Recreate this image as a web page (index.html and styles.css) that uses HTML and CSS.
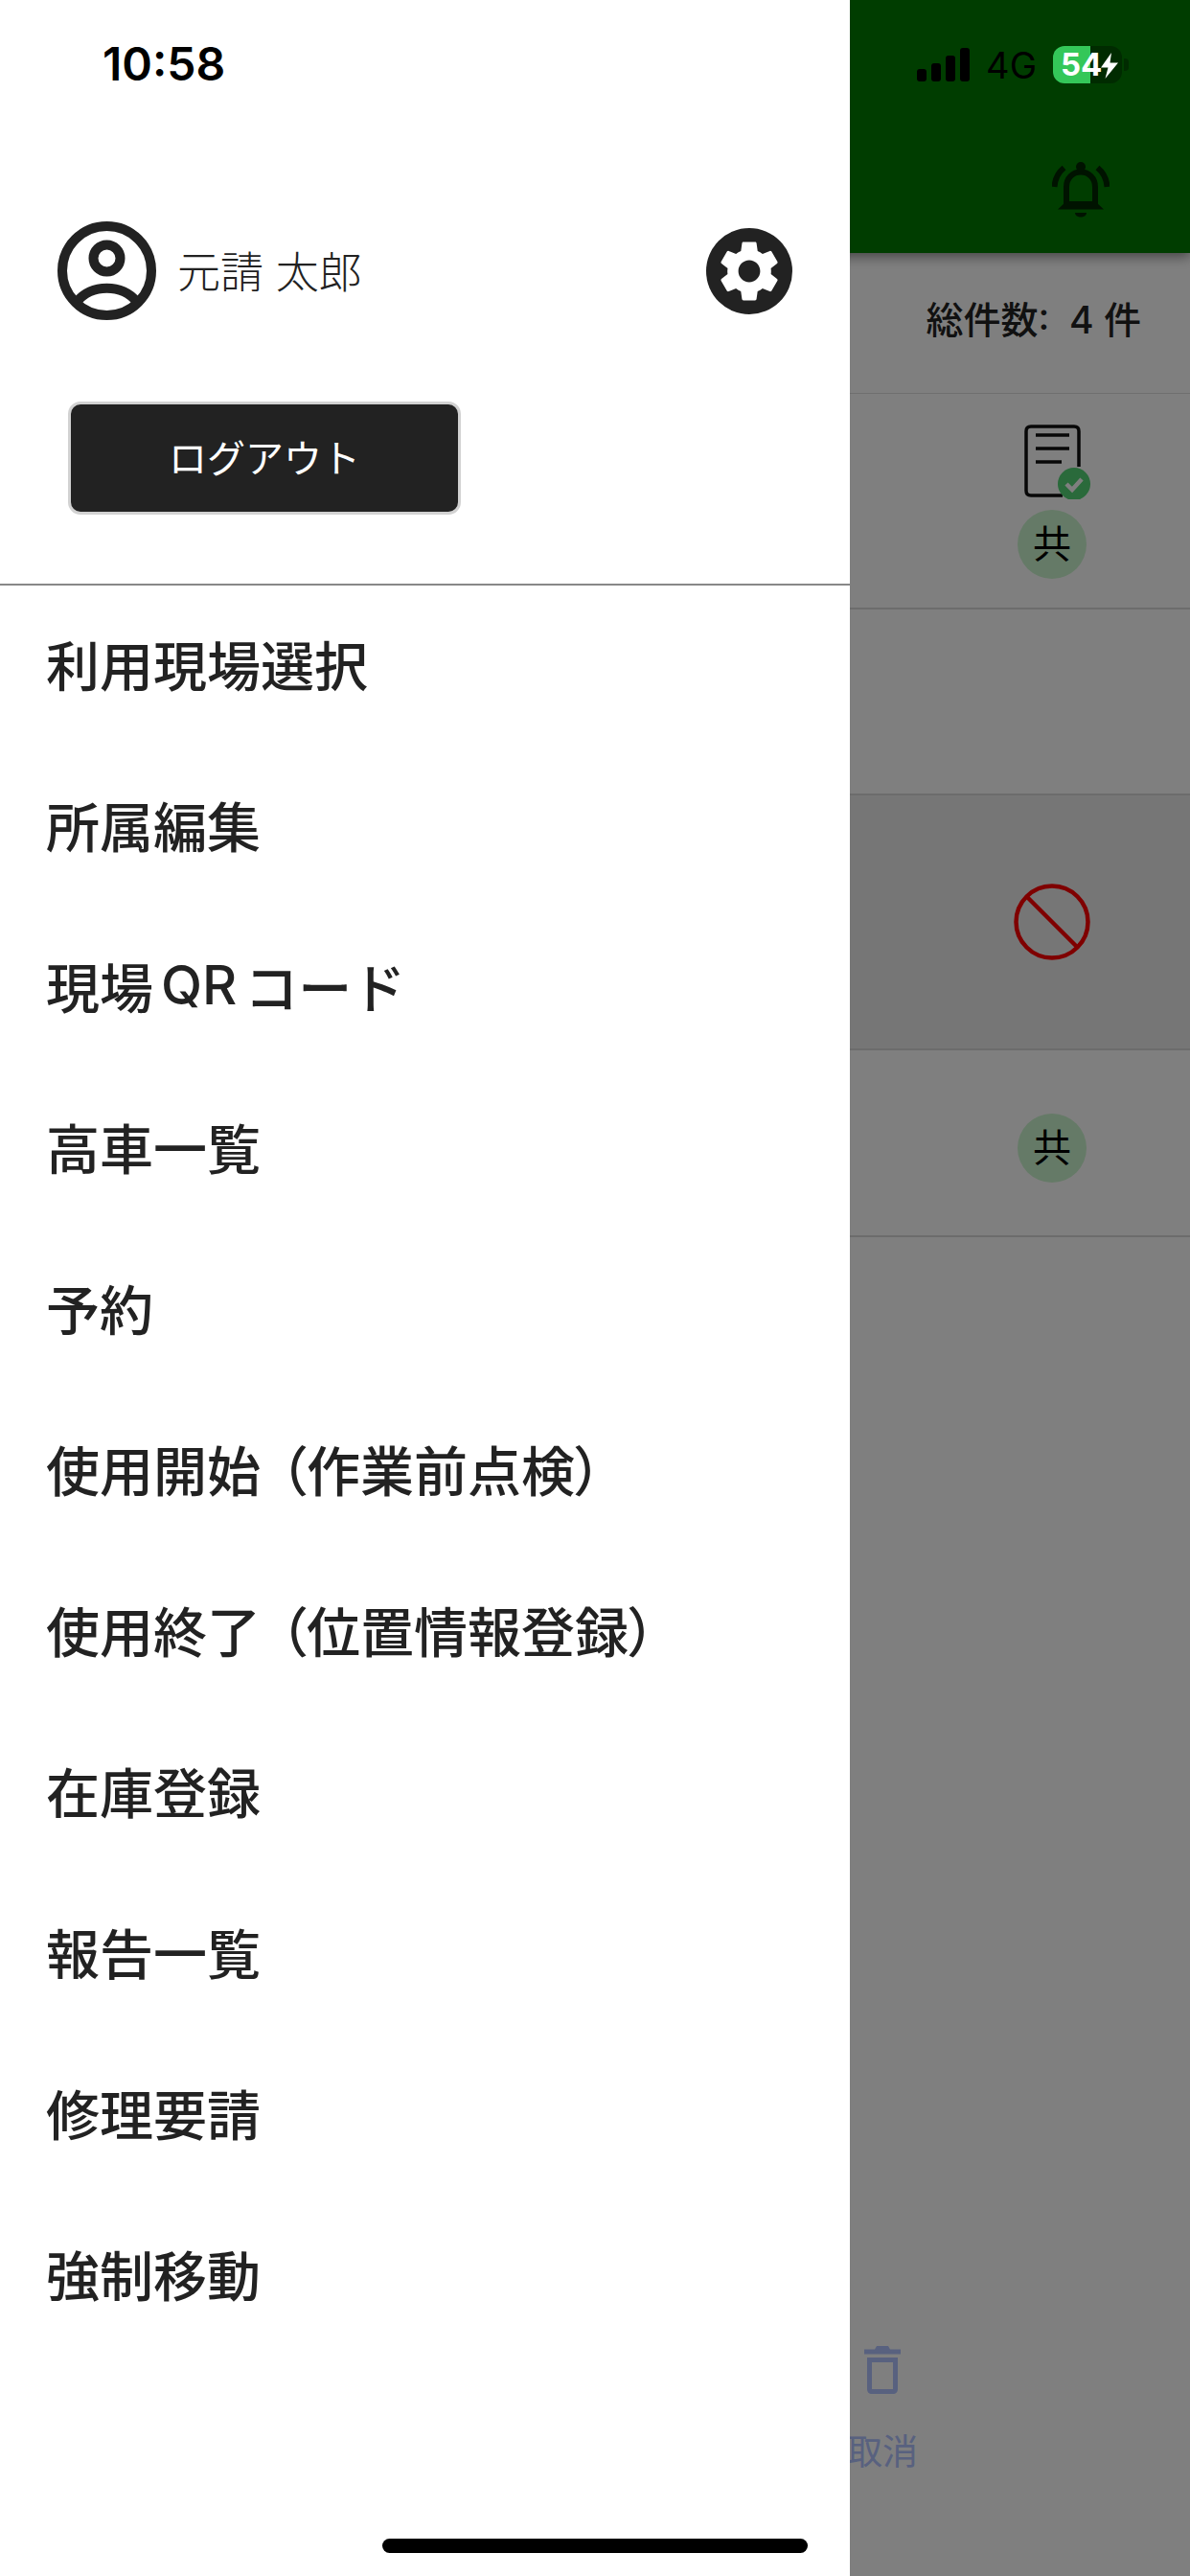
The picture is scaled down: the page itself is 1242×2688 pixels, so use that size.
FILE: index.html
```html
<!DOCTYPE html>
<html lang="ja">
<head>
<meta charset="utf-8">
<title>メニュー</title>
<link rel="stylesheet" href="styles.css">
</head>
<body>
<div class="screen">
  <main class="app">
    <header class="app-header">
      <svg class="bell" viewBox="0 0 60 60" fill="none" stroke="currentColor">
        <path d="M2.500 27C3 19 6.500 12 12.500 7M57.500 27C57 19 53.500 12 47.500 7" stroke-width="6"/>
        <path d="M15 46V27C15 18 21.500 11.500 30 11.500S45 18 45 27V46" stroke-width="6"/>
        <circle cx="30" cy="6" r="5" fill="currentColor" stroke="none"/>
        <path d="M6 50.500L15 42H45L54 50.500Z" fill="currentColor" stroke="none"/>
        <path d="M24 54H36C36 60 24 60 24 54Z" fill="currentColor" stroke="none"/>
      </svg>
    </header>
    <div class="summary">総件数:&nbsp;&nbsp;4 件</div>
    <section class="row row-one">
      <svg class="doc" viewBox="0 0 70 78" fill="none" stroke="currentColor" stroke-width="3.500">
        <path d="M40 74H7C3.500 74 2 72 2 69V7C2 4 3.500 2 7 2H52C55.500 2 57 4 57 7V44"/>
        <path d="M12 11H47M12 25H47M12 39H39"/>
        <circle class="doc-check-bg" cx="52" cy="62" r="17" stroke="none"/>
        <path class="doc-check" d="M44 62L50 68L60 57" stroke-width="4.500"/>
      </svg>
      <span class="badge">共</span>
    </section>
    <section class="row row-two"></section>
    <section class="row row-three">
      <svg class="ban" viewBox="0 0 80 80" fill="none" stroke="currentColor" stroke-width="4.500">
        <circle cx="40" cy="40" r="37.500"/>
        <path d="M13.500 13.500L66.500 66.500"/>
      </svg>
    </section>
    <section class="row row-four"><span class="badge">共</span></section>
    <footer class="toolbar">
      <div class="tool">
        <svg class="trash" viewBox="0 0 38 50">
          <path d="M0 3.500H11L13 0H25L27 3.500H38V8.500H0Z"/>
          <path d="M3 12H35V45C35 48 33 50 30 50H8C5 50 3 48 3 45ZM8 17V45H30V17Z" fill-rule="evenodd"/>
        </svg>
        <span class="tool-label">取消</span>
      </div>
    </footer>
  </main>

  <div class="scrim"></div>

  <aside class="drawer">
    <div class="drawer-head">
      <div class="profile">
        <svg class="avatar" viewBox="0 0 103 103" fill="none" stroke="currentColor" stroke-width="10">
          <circle cx="51.500" cy="51.500" r="46.500"/>
          <circle cx="51.500" cy="38.500" r="14"/>
          <path d="M20 84C36 65 67 65 83 84"/>
        </svg>
        <span class="name">元請 太郎</span>
        <span class="settings">
          <svg class="gear" viewBox="0 0 24 24"><path d="M19.140 12.940c.04-.3.06-.61.06-.94 0-.32-.02-.64-.07-.94l2.030-1.580c.18-.14.23-.41.12-.61l-1.920-3.320c-.12-.22-.37-.29-.59-.22l-2.390.96c-.5-.38-1.030-.7-1.620-.94l-.36-2.540c-.04-.24-.24-.41-.48-.41h-3.840c-.24 0-.43.17-.47.41l-.36 2.540c-.59.24-1.130.57-1.620.94l-2.390-.96c-.22-.08-.47 0-.59.22L2.740 8.870c-.12.21-.08.47.12.61l2.030 1.580c-.05.3-.09.63-.09.94s.02.64.07.94l-2.030 1.580c-.18.14-.23.41-.12.61l1.920 3.320c.12.22.37.29.59.22l2.390-.96c.5.38 1.030.7 1.620.94l.36 2.540c.05.24.24.41.48.41h3.840c.24 0 .44-.17.47-.41l.36-2.540c.59-.24 1.130-.56 1.620-.94l2.390.96c.22.08.47 0 .59-.22l1.920-3.320c.12-.22.07-.47-.12-.61l-2.010-1.580zM12 15.600c-1.980 0-3.600-1.620-3.600-3.600s1.620-3.600 3.600-3.600 3.600 1.620 3.600 3.600-1.620 3.600-3.600 3.600z"/></svg>
        </span>
      </div>
      <button class="logout" type="button">ログアウト</button>
    </div>
    <nav class="menu">
      <a class="menu-item">利用現場選択</a>
      <a class="menu-item">所属編集</a>
      <a class="menu-item">現場<span class="latin">QR</span>コード</a>
      <a class="menu-item">高車一覧</a>
      <a class="menu-item">予約</a>
      <a class="menu-item">使用開始<span class="open">（</span>作業前点検<span class="close">）</span></a>
      <a class="menu-item">使用終了<span class="open">（</span>位置情報登録<span class="close">）</span></a>
      <a class="menu-item">在庫登録</a>
      <a class="menu-item">報告一覧</a>
      <a class="menu-item">修理要請</a>
      <a class="menu-item">強制移動</a>
    </nav>
  </aside>

  <div class="status-bar">
    <span class="time">10:58</span>
    <div class="status-right">
      <div class="signal"><i class="bar b1"></i><i class="bar b2"></i><i class="bar b3"></i><i class="bar b4"></i></div>
      <span class="network">4G</span>
      <div class="battery">
        <span class="battery-fill"></span>
        <span class="battery-value">54</span>
        <svg class="bolt" viewBox="0 0 18 27"><path d="M11 0L0 15.500H7.500L4.500 27L18 10.500H9.500Z"/></svg>
        <span class="battery-nub"></span>
      </div>
    </div>
  </div>

  <div class="home-indicator"></div>
</div>
</body>
</html>
```
FILE: styles.css
```css
* { box-sizing: border-box; }

html, body {
  margin: 0;
  padding: 0;
  background: #fff;
}

body {
  font-family: Inter, "Noto Sans CJK JP", sans-serif;
  color: #222;
}

.screen {
  position: relative;
  width: 1242px;
  height: 2688px;
  overflow: hidden;
}

/* page beneath the drawer */
.app {
  display: flex;
  flex-direction: column;
  height: 100%;
  background: #fff;
}

.app-header {
  position: relative;
  height: 264px;
  flex: none;
  padding: 168px 84px 0 0;
  display: flex;
  justify-content: flex-end;
  background: #007a00;
  box-shadow: 0 4px 12px rgba(0, 0, 0, .45);
}

.bell {
  width: 60px;
  height: 60px;
  color: #002600;
}

.summary {
  height: 147px;
  flex: none;
  display: flex;
  align-items: center;
  justify-content: flex-end;
  padding: 0 51px 12px 0;
  font-size: 39px;
  font-weight: 500;
  border-bottom: 1px solid #dedede;
}

.row {
  flex: none;
  display: flex;
  flex-direction: column;
  align-items: center;
  padding-left: 912px;
  border-bottom: 2px solid #d8d8d8;
  width: 1284px;
}

.row-one { height: 225px; padding-top: 32px; }
.row-two { height: 194px; }
.row-three { height: 266px; justify-content: center; background: #ececec; }
.row-four { height: 195px; justify-content: center; padding-top: 10px; }

.doc {
  width: 70px;
  height: 78px;
  color: #111;
  position: relative;
  left: 6px;
}

.doc-check-bg { fill: #54d476; }
.doc-check { stroke: #fff; }

.badge {
  width: 72px;
  height: 72px;
  margin-top: 11px;
  flex: none;
  border-radius: 50%;
  display: flex;
  align-items: center;
  justify-content: center;
  background: #cbf4ce;
  color: #000;
  font-size: 40px;
  line-height: 1;
}

.row-four .badge { margin-top: 0; }

.ban {
  width: 80px;
  height: 80px;
  color: #ff0000;
}

.toolbar {
  margin-top: auto;
  padding: 0 0 104px 871px;
}

.tool {
  width: 100px;
  display: flex;
  flex-direction: column;
  align-items: center;
  gap: 36px;
  color: #b0c2ff;
}

.trash {
  width: 38px;
  height: 50px;
  fill: currentColor;
}

.tool-label {
  font-size: 37px;
  line-height: 50px;
  white-space: nowrap;
}

.scrim {
  position: absolute;
  inset: 0;
  background: rgba(0, 0, 0, .5);
}

/* navigation drawer */
.drawer {
  position: absolute;
  top: 0;
  left: 0;
  bottom: 0;
  width: 887px;
  display: flex;
  flex-direction: column;
  background: #fff;
}

.drawer-head {
  height: 611px;
  flex: none;
  padding-top: 231px;
  border-bottom: 2px solid #888;
}

.profile {
  height: 103px;
  display: flex;
  align-items: center;
  padding: 0 60px;
}

.avatar {
  width: 103px;
  height: 103px;
  flex: none;
  color: #222;
}

.name {
  margin: 0 0 3px 22px;
  font-size: 45px;
  font-weight: 300;
}

.settings {
  width: 90px;
  height: 90px;
  margin-left: auto;
  flex: none;
  display: flex;
  align-items: center;
  justify-content: center;
  border-radius: 50%;
  background: #222;
}

.gear {
  width: 76px;
  height: 76px;
  fill: #fff;
}

.logout {
  display: flex;
  align-items: center;
  justify-content: center;
  width: 410px;
  height: 118px;
  margin: 85px 0 0 71px;
  padding: 0 0 5px;
  border: 3px solid #d2d2d2;
  border-radius: 13px;
  background: #222;
  color: #fff;
  font-family: inherit;
  font-size: 40px;
}

.menu {
  flex: 1;
  display: flex;
  flex-direction: column;
}

.menu-item {
  height: 168px;
  flex: none;
  display: flex;
  align-items: center;
  padding: 0 0 7px 48px;
  font-size: 56px;
  font-weight: 500;
  white-space: pre;
}

.latin {
  margin: 0 8px;
}

.open {
  margin-left: 20px;
  font-feature-settings: "palt";
}

.close {
  font-feature-settings: "palt";
}

/* system chrome */
.status-bar {
  position: absolute;
  top: 0;
  left: 0;
  right: 0;
  height: 134px;
  display: flex;
  padding: 46px 71px 0 107px;
  justify-content: space-between;
  align-items: flex-start;
}

.time {
  font-size: 48px;
  font-weight: 600;
  line-height: 42px;
  color: #000;
}

.status-right {
  display: flex;
  align-items: flex-start;
}

.signal {
  display: flex;
  align-items: flex-end;
  gap: 5px;
  height: 35px;
  margin-top: 4px;
}

.bar {
  width: 10px;
  border-radius: 3px;
  background: #000;
}

.b1 { height: 13px; }
.b2 { height: 19px; }
.b3 { height: 27px; }
.b4 { height: 35px; }

.network {
  margin: 0 17px 0 17px;
  font-size: 38px;
  line-height: 44px;
  color: #000;
}

.battery {
  position: relative;
  width: 72px;
  height: 39px;
  margin-top: 2px;
  border-radius: 12px;
  background: #002b00;
}

.battery-fill {
  position: absolute;
  top: 0;
  left: 0;
  bottom: 0;
  width: 39px;
  border-radius: 12px 0 0 12px;
  background: #34c759;
}

.battery-value {
  position: absolute;
  top: 0;
  left: 8px;
  font-size: 33px;
  font-weight: 700;
  line-height: 39px;
  color: #fff;
}

.bolt {
  position: absolute;
  top: 7px;
  left: 50px;
  width: 18px;
  height: 27px;
  fill: #fff;
}

.battery-nub {
  position: absolute;
  top: 13px;
  right: -7px;
  width: 5px;
  height: 13px;
  border-radius: 0 4px 4px 0;
  background: #002b00;
}

.home-indicator {
  position: absolute;
  left: 399px;
  top: 2649px;
  width: 444px;
  height: 15px;
  border-radius: 8px;
  background: #000;
}
```
